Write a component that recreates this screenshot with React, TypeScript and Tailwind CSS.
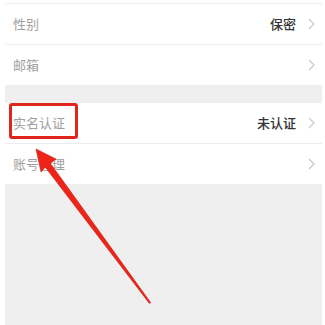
type Row = { label: string; value?: string };

const groupA: Row[] = [{ label: "性别", value: "保密" }, { label: "邮箱" }];
const groupB: Row[] = [{ label: "实名认证", value: "未认证" }, { label: "账号管理" }];

function Chevron() {
    return (
        <svg width="7" height="12" viewBox="0 0 7 12" className="text-[#c8c8c8]">
            <polyline points="1,1 6,6 1,11" fill="none" stroke="currentColor" strokeWidth="1.2" />
        </svg>
    );
}

function SettingRow({ label, value }: Row) {
    return (
        <div className="flex h-[41px] items-center justify-between border-b border-[#ededed] bg-white pl-[8px] pr-[7px]">
            <span className="text-[13px] text-[#a0a0a0]">{label}</span>
            <div className="flex items-center gap-[12px]">
                {value && <span className="text-[13px] font-medium text-[#333]">{value}</span>}
                <Chevron />
            </div>
        </div>
    );
}

export default function App() {
    return (
        <div
            className="relative h-[325px] w-[325px] overflow-hidden bg-white pl-[5px] pr-[3px]"
            style={{ fontFamily: '"Noto Sans CJK SC", "Noto Sans", sans-serif' }}
        >
            <div className="flex h-full flex-col bg-[#efefef]">
                <div className="h-[4px] border-b border-[#ededed] bg-white" />
                {groupA.map((r) => (
                    <SettingRow key={r.label} {...r} />
                ))}
                <div className="h-[17px]" />
                {groupB.map((r) => (
                    <SettingRow key={r.label} {...r} />
                ))}
            </div>

            {/* annotation: highlight box */}
            <div className="absolute left-[9px] top-[103px] h-[36px] w-[69px] rounded-[3px] border-[3px] border-[#e0261c]" />

            {/* annotation: arrow */}
            <svg className="absolute inset-0" width="325" height="325" viewBox="0 0 325 325">
                <polygon
                    points="36,149 56,159 50.5,163.5 150.6,302.6 149.4,303.4 45.3,167.2 41,172"
                    fill="#ee2419"
                    stroke="#c81e14"
                    strokeWidth="0.6"
                    strokeLinejoin="round"
                />
            </svg>
        </div>
    );
}
